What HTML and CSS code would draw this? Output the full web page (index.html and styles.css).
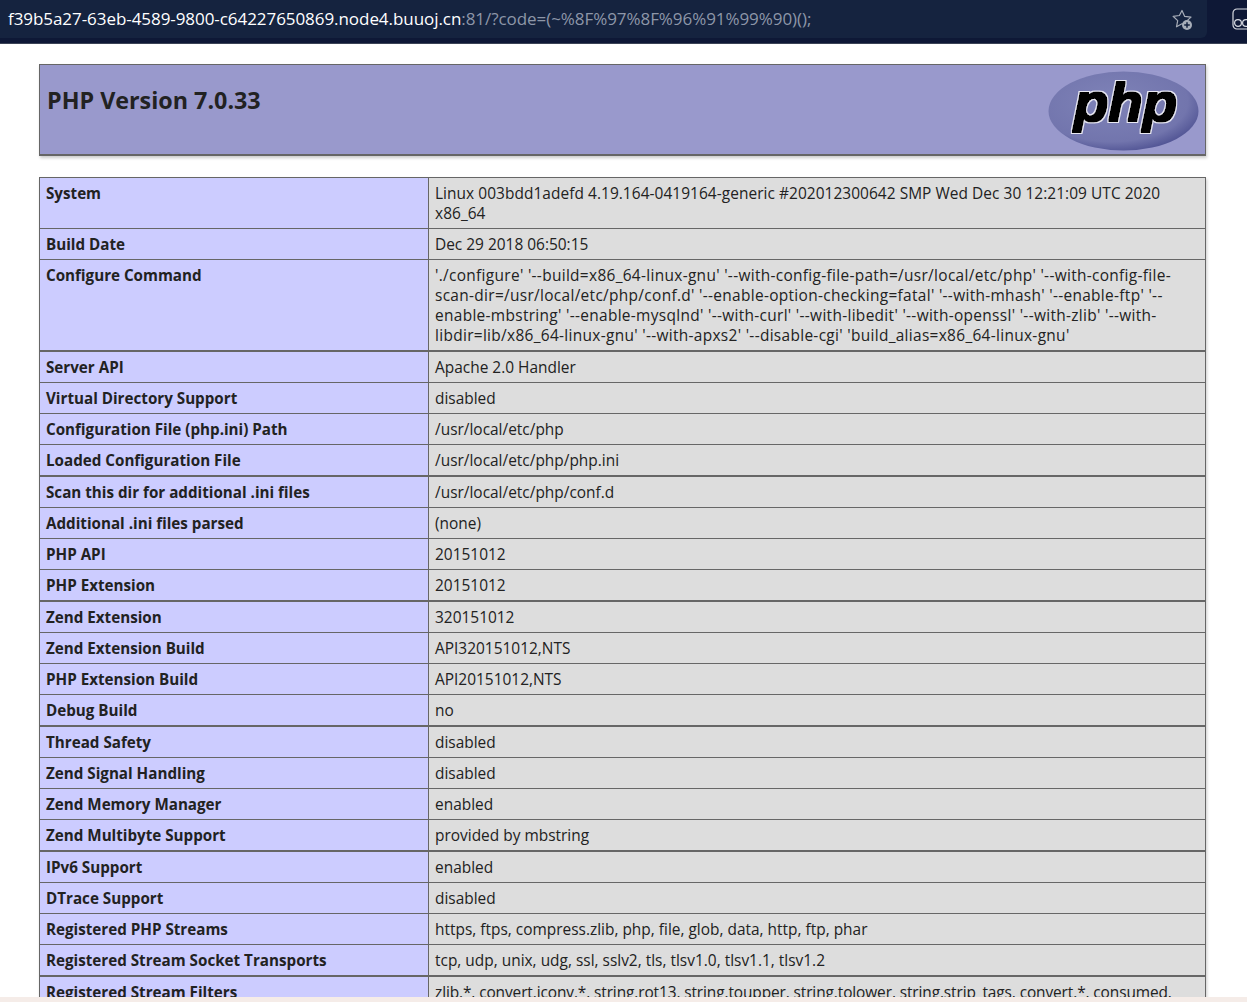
FILE: index.html
```html
<!DOCTYPE html>
<html lang="en">
<head>
<meta charset="utf-8">
<title>phpinfo()</title>
<link rel="stylesheet" href="styles.css">
</head>
<body>
<header class="chrome">
  <div class="address">
    <div class="url"><span class="host">f39b5a27-63eb-4589-9800-c64227650869.node4.buuoj.cn</span><span class="rest">:81/?code=(~%8F%97%8F%96%91%99%90)();</span></div>
    <svg class="star" width="24" height="24" viewBox="0 0 24 24" aria-hidden="true">
      <path d="M12 2.5l2.7 5.9 6.3.7-4.7 4.3 1 4.2-1 .4-4.3-2.2-5.5 3 1.2-6.2-4.6-4.3 6.3-.8z" fill="none" stroke="#a8aeb9" stroke-width="1.2" stroke-linejoin="round"/>
      <circle cx="17" cy="17" r="5" fill="#a8aeb9"/>
      <path d="M17 14.2v5.6M14.2 17h5.6" stroke="#15233f" stroke-width="1.5"/>
    </svg>
  </div>
  <svg class="ext" width="15" height="22" viewBox="0 0 15 22" aria-hidden="true">
    <rect x="1" y="1" width="24" height="20" rx="4" fill="none" stroke="#d8dbe2" stroke-width="1.2"/>
    <circle cx="6" cy="15" r="3.4" fill="none" stroke="#d8dbe2" stroke-width="1.2"/>
    <circle cx="14" cy="15" r="3.4" fill="none" stroke="#d8dbe2" stroke-width="1.2"/>
  </svg>
</header>
<main class="page">
  <div class="banner">
    <h1>PHP Version 7.0.33</h1>
    <svg class="logo" width="152" height="80" viewBox="0 0 152 80" role="img" aria-label="PHP logo">
      <defs>
        <radialGradient id="oval" cx="42%" cy="38%" r="68%">
          <stop offset="0" stop-color="#7f83b8"/>
          <stop offset=".75" stop-color="#7275ad"/>
          <stop offset="1" stop-color="#4a4d8f"/>
        </radialGradient>
        <filter id="heavy" x="-10%" y="-10%" width="120%" height="120%">
          <feMorphology in="SourceAlpha" operator="dilate" radius="2" result="outer"/>
          <feFlood flood-color="#e8e8f2"/>
          <feComposite in2="outer" operator="in" result="halo"/>
          <feMorphology in="SourceAlpha" operator="dilate" radius="1" result="inner"/>
          <feFlood flood-color="#000"/>
          <feComposite in2="inner" operator="in" result="body"/>
          <feMerge>
            <feMergeNode in="halo"/>
            <feMergeNode in="body"/>
          </feMerge>
        </filter>
      </defs>
      <ellipse cx="76.5" cy="40" rx="75" ry="39.5" fill="url(#oval)"/>
      <text class="logo-text" x="27" y="50" textLength="103" lengthAdjust="spacingAndGlyphs" filter="url(#heavy)">php</text>
    </svg>
  </div>
  <div class="info">
    <div class="row"><div class="k">System</div><div class="v sys">Linux 003bdd1adefd 4.19.164-0419164-generic #202012300642 SMP Wed Dec 30 12:21:09 UTC 2020<br>x86_64</div></div>
    <div class="row"><div class="k">Build Date</div><div class="v">Dec 29 2018 06:50:15</div></div>
    <div class="row"><div class="k">Configure Command</div><div class="v cfg">'./configure' '--build=x86_64-linux-gnu' '--with-config-file-path=/usr/local/etc/php' '--with-config-file-<br>scan-dir=/usr/local/etc/php/conf.d' '--enable-option-checking=fatal' '--with-mhash' '--enable-ftp' '--<br>enable-mbstring' '--enable-mysqlnd' '--with-curl' '--with-libedit' '--with-openssl' '--with-zlib' '--with-<br>libdir=lib/x86_64-linux-gnu' '--with-apxs2' '--disable-cgi' 'build_alias=x86_64-linux-gnu'</div></div>
    <div class="row thick"><div class="k">Server API</div><div class="v">Apache 2.0 Handler</div></div>
    <div class="row"><div class="k">Virtual Directory Support</div><div class="v">disabled</div></div>
    <div class="row"><div class="k">Configuration File (php.ini) Path</div><div class="v">/usr/local/etc/php</div></div>
    <div class="row"><div class="k">Loaded Configuration File</div><div class="v">/usr/local/etc/php/php.ini</div></div>
    <div class="row thick"><div class="k">Scan this dir for additional .ini files</div><div class="v">/usr/local/etc/php/conf.d</div></div>
    <div class="row"><div class="k">Additional .ini files parsed</div><div class="v">(none)</div></div>
    <div class="row"><div class="k">PHP API</div><div class="v">20151012</div></div>
    <div class="row"><div class="k">PHP Extension</div><div class="v">20151012</div></div>
    <div class="row thick"><div class="k">Zend Extension</div><div class="v">320151012</div></div>
    <div class="row"><div class="k">Zend Extension Build</div><div class="v">API320151012,NTS</div></div>
    <div class="row"><div class="k">PHP Extension Build</div><div class="v">API20151012,NTS</div></div>
    <div class="row"><div class="k">Debug Build</div><div class="v">no</div></div>
    <div class="row thick"><div class="k">Thread Safety</div><div class="v">disabled</div></div>
    <div class="row"><div class="k">Zend Signal Handling</div><div class="v">disabled</div></div>
    <div class="row"><div class="k">Zend Memory Manager</div><div class="v">enabled</div></div>
    <div class="row"><div class="k">Zend Multibyte Support</div><div class="v">provided by mbstring</div></div>
    <div class="row thick"><div class="k">IPv6 Support</div><div class="v">enabled</div></div>
    <div class="row"><div class="k">DTrace Support</div><div class="v">disabled</div></div>
    <div class="row"><div class="k">Registered PHP Streams</div><div class="v">https, ftps, compress.zlib, php, file, glob, data, http, ftp, phar</div></div>
    <div class="row"><div class="k">Registered Stream Socket Transports</div><div class="v">tcp, udp, unix, udg, ssl, sslv2, tls, tlsv1.0, tlsv1.1, tlsv1.2</div></div>
    <div class="row thick"><div class="k">Registered Stream Filters</div><div class="v flt">zlib.*, convert.iconv.*, string.rot13, string.toupper, string.tolower, string.strip_tags, convert.*, consumed,</div></div>
  </div>
</main>
<div class="strip"></div>
</body>
</html>
```
FILE: styles.css
```css
html, body {
  margin: 0;
  height: 100%;
  overflow: hidden;
}
body {
  display: flex;
  flex-direction: column;
  background: #fff;
  color: #222;
  font-family: "Open Sans", "Noto Sans", sans-serif;
}
.chrome {
  flex: none;
  height: 44px;
  box-sizing: border-box;
  display: flex;
  justify-content: space-between;
  align-items: flex-start;
  background: #0e1836;
  border-bottom: 1px solid #3b4356;
}
.address {
  width: 1207px;
  height: 38px;
  box-sizing: border-box;
  display: flex;
  justify-content: space-between;
  align-items: center;
  padding: 0 13px 0 8px;
  background: #15233f;
  border-radius: 0 0 6px 0;
}
.url {
  font-size: 17px;
  letter-spacing: -.06px;
  white-space: nowrap;
  margin-top: -2px;
}
.host { color: #fff; }
.rest { color: #8d96a8; }
.star { margin-top: 1px; }
.ext { margin-top: 8px; }
.page {
  flex: 1;
  min-height: 0;
  overflow: hidden;
  padding: 20px 41px 0 39px;
}
.banner {
  height: 92px;
  box-sizing: border-box;
  display: flex;
  justify-content: space-between;
  padding: 6px 6px 0 7px;
  background: #9999cc;
  border: 1px solid #666;
  border-bottom-width: 2px;
  box-shadow: 1px 2px 3px #ccc;
}
.banner h1 {
  margin: 10px 0 0;
  font-size: 23.3px;
  line-height: 38px;
  font-weight: 700;
}
.logo { flex: none; }
.logo-text {
  font-family: "Liberation Sans", sans-serif;
  font-size: 54px;
  font-weight: 700;
  font-style: italic;
  fill: #000;
}
.info {
  margin-top: 21px;
  border: 1px solid #666;
  border-bottom: 0;
  box-shadow: 1px 2px 3px #ccc;
  font-size: 15.45px;
  line-height: 20px;
}
.row {
  display: grid;
  grid-template-columns: 389px 1fr;
  border-bottom: 1px solid #666;
}
.row.thick { border-top: 1px solid #666; }
.k, .v {
  padding: 5px 6px;
  white-space: nowrap;
}
.k {
  background: #ccccff;
  font-size: 15.2px;
  font-weight: 700;
  border-right: 1px solid #666;
}
.v { background: #dddddd; }
.sys { letter-spacing: .055px; }
.cfg { letter-spacing: .31px; }
.flt { letter-spacing: -.11px; }
.strip {
  flex: none;
  height: 5px;
  background: #f5ece8;
}
```
